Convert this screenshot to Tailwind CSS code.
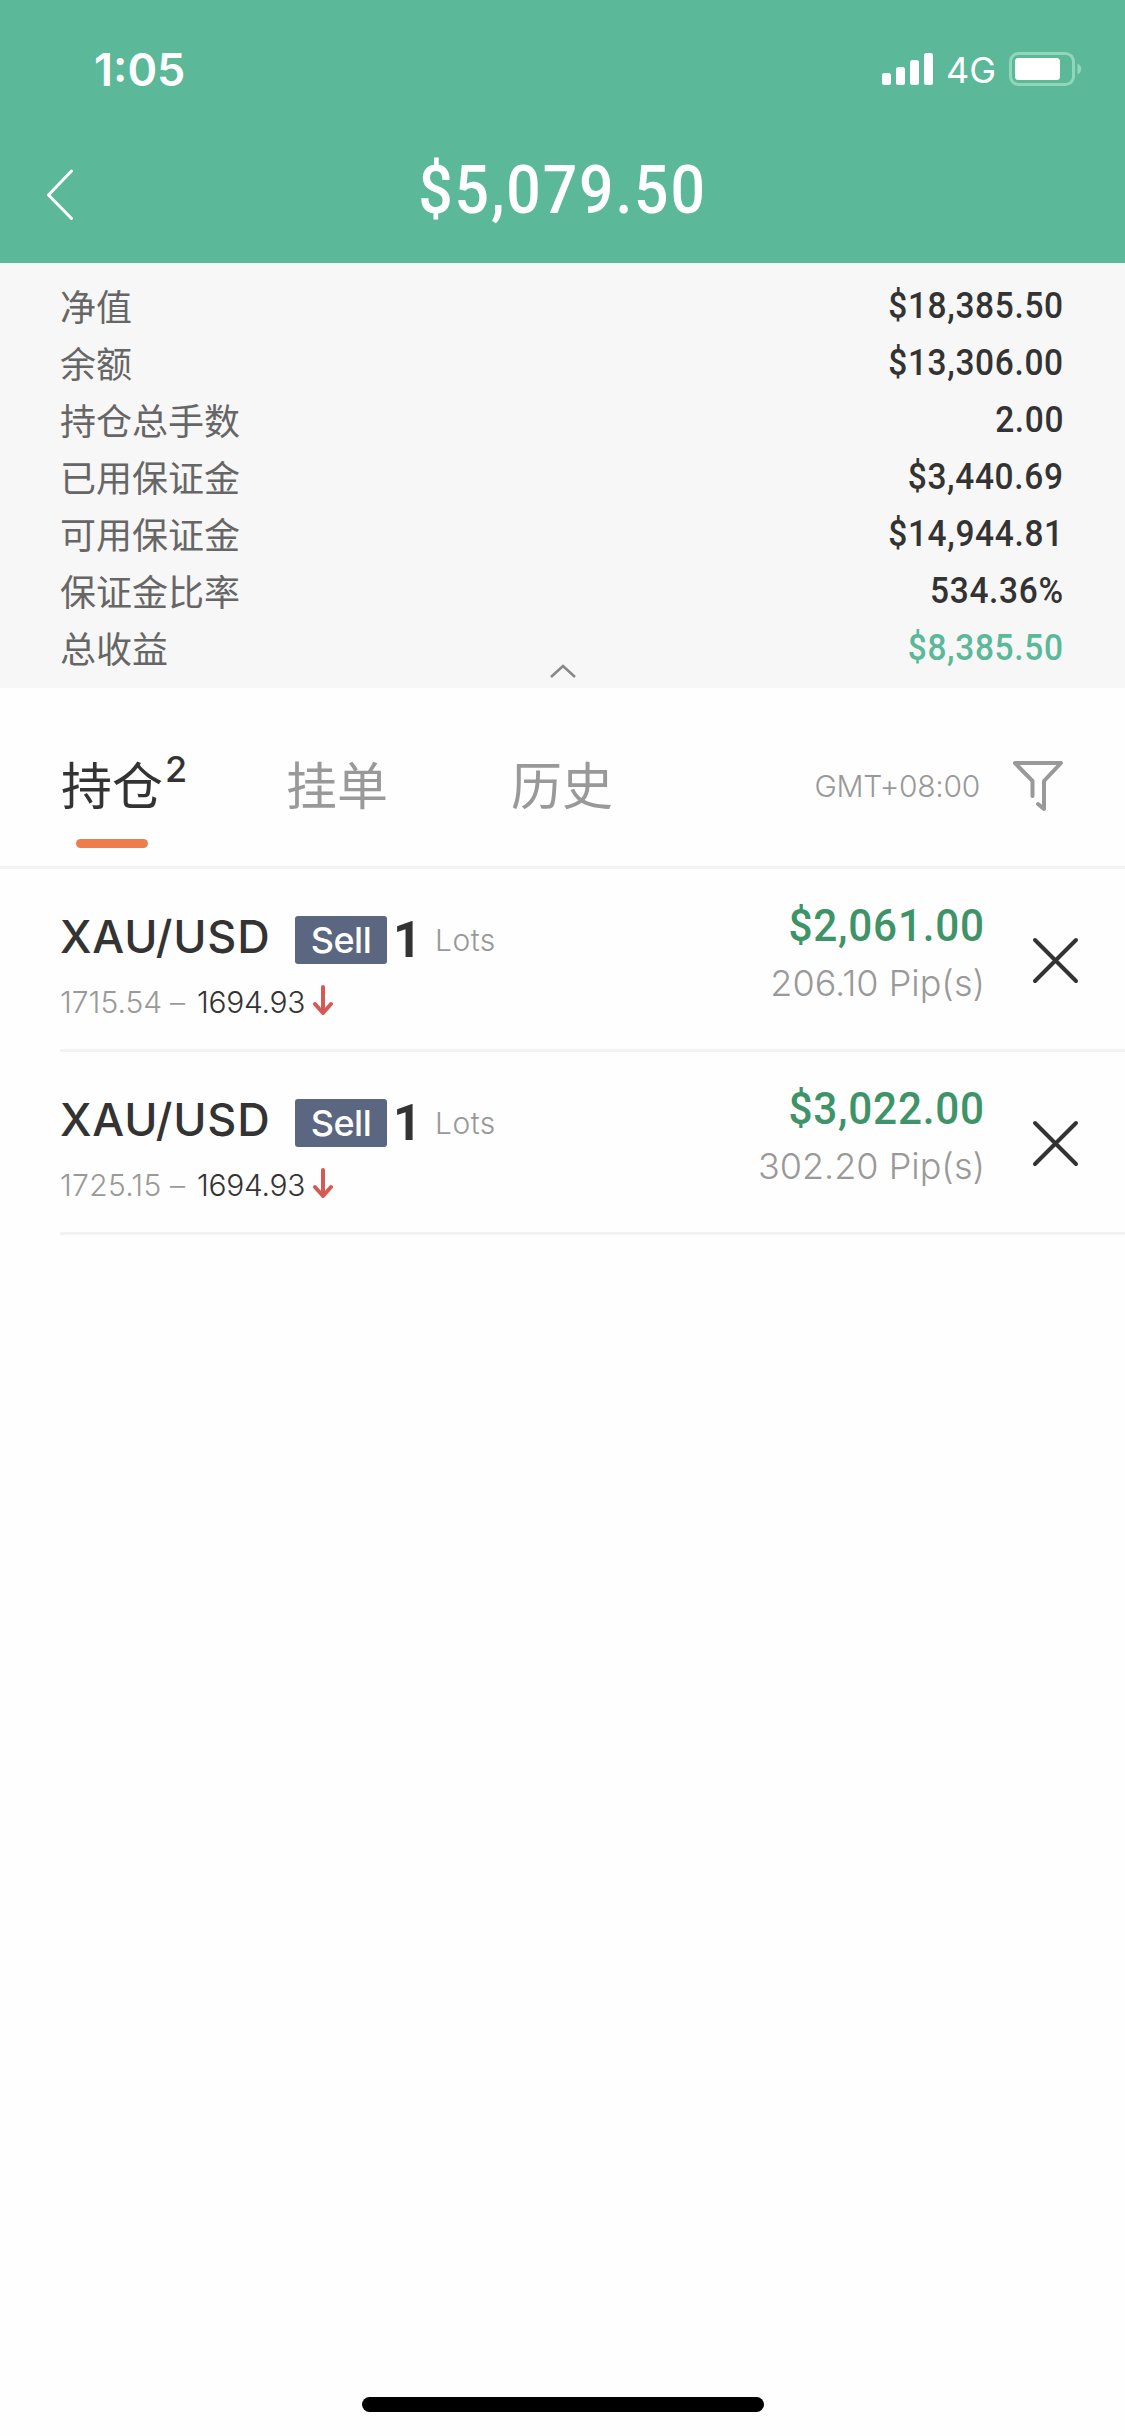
<!DOCTYPE html>
<html lang="zh-CN">
<head>
<meta charset="utf-8">
<title>持仓</title>
<script src="https://cdn.jsdelivr.net/npm/@tailwindcss/browser@4"></script>
</head>
<body class="w-[1125px] h-[2436px] bg-[#fefefe] font-['Inter','Noto_Sans_CJK_SC',sans-serif] flex flex-col overflow-hidden text-[#333]">
<header class="h-[263px] bg-[#5bb899] text-white flex flex-col shrink-0">
  <div class="h-[138px] pl-[94px] pr-[42px] flex items-center justify-between">
    <span class="text-[45px] leading-none font-semibold">1:05</span>
    <div class="flex items-center">
      <svg class="w-[52px] h-[34px]" viewBox="0 0 52 34" fill="currentColor"><rect x="0" y="21" width="9" height="12" rx="2.5"/><rect x="14" y="15" width="9" height="18" rx="2.5"/><rect x="28" y="8" width="9" height="25" rx="2.5"/><rect x="42" y="1" width="9" height="32" rx="2.5"/></svg>
      <span class="ml-[12px] w-[63px] text-[36px] leading-none mt-[2px]">4G</span>
      <svg class="w-[74px] h-[34px]" viewBox="0 0 74 34"><rect x="1.5" y="1.5" width="63" height="31" rx="8" fill="none" stroke="#8fd6ba" stroke-width="3"/><rect x="6" y="6" width="45" height="22" rx="3.5" fill="#fff"/><path d="M68.500 11.500c5 2 5 9 0 11z" fill="#8fd6ba"/></svg>
    </div>
  </div>
  <div class="h-[112px] grid grid-cols-[120px_1fr_120px] items-center">
    <svg class="ml-[44px] w-[32px] h-[54px]" viewBox="0 0 32 54" fill="none" stroke="currentColor" stroke-width="3" stroke-linecap="round" stroke-linejoin="round"><path d="M27.500 4L4.500 28 27.500 51.500"/></svg>
    <h1 class="text-center font-['Roboto',sans-serif] font-medium text-[66px] leading-none tracking-[2px] scale-x-[0.92] -mt-[7px]">$5,079.50</h1>
  </div>
</header>

<section class="relative h-[425px] shrink-0 bg-[#f7f7f7] pt-[15px] pl-[60px] pr-[61px] text-[36px] leading-[57px]">
  <dl class="text-[#666] [&_dt]:pt-[2px] [&_dt]:font-normal [&_dd]:font-['Roboto',sans-serif] [&_dd]:font-medium [&_dd]:text-[#333] [&_dd]:origin-right [&_dd]:scale-x-[0.93] [&_dd]:tracking-[0.700px]">
    <div class="flex justify-between h-[57px]"><dt>净值</dt><dd>$18,385.50</dd></div>
    <div class="flex justify-between h-[57px]"><dt>余额</dt><dd>$13,306.00</dd></div>
    <div class="flex justify-between h-[57px]"><dt>持仓总手数</dt><dd>2.00</dd></div>
    <div class="flex justify-between h-[57px]"><dt>已用保证金</dt><dd>$3,440.69</dd></div>
    <div class="flex justify-between h-[57px]"><dt>可用保证金</dt><dd>$14,944.81</dd></div>
    <div class="flex justify-between h-[57px]"><dt>保证金比率</dt><dd>534.36%</dd></div>
    <div class="flex justify-between h-[57px]"><dt>总收益</dt><dd class="text-[#5bb899]!">$8,385.50</dd></div>
  </dl>
  <svg class="absolute left-[549px] top-[400px] w-[28px] h-[16px]" viewBox="0 0 28 16" fill="none" stroke="#888" stroke-width="2.500"><path d="M2 14L14 3l12 11"/></svg>
</section>

<nav class="h-[181px] shrink-0 border-b-[3px] border-[#f2f2f2] pl-[61px] pr-[60px] flex text-[51px] leading-none text-[#999]">
  <div class="w-[225px] flex flex-col text-[#333]">
    <div class="h-[151px] pt-[73px] flex"><span>持仓</span><span class="text-[36px] font-medium -mt-[10px] ml-[2px]">2</span></div>
    <div class="ml-[15px] w-[72px] h-[9px] rounded-full bg-[#ee7d4d]"></div>
  </div>
  <span class="w-[225px] pt-[73px]">挂单</span>
  <span class="pt-[73px]">历史</span>
  <span class="ml-auto pt-[83px] text-[30px] font-light tracking-[-0.300px]">GMT+08:00</span>
  <svg class="ml-[31px] mt-[71px] w-[54px] h-[54px]" viewBox="0 0 54 54" fill="none" stroke="#999" stroke-width="4" stroke-linecap="round" stroke-linejoin="round"><path d="M21.500 37V22L4 4h46L33 22v28l-6-5"/></svg>
</nav>

<main class="flex-1">
  <article class="ml-[60px] h-[183px] border-b-[3px] border-[#f2f2f2] flex">
    <div class="pt-[47px]">
      <div class="flex items-start h-[48px]">
        <span class="w-[235px] text-[45px] leading-[41px] font-medium tracking-[0.800px]">XAU/USD</span>
        <span class="w-[92px] h-[48px] rounded-[3px] bg-[#5b6680] text-white text-[36px] leading-[48px] font-medium text-center tracking-[-0.500px]">Sell</span>
        <span class="w-[48px] pl-[6px] text-[50px] leading-[49px] font-['Roboto',sans-serif] font-bold">1</span>
        <span class="text-[30px] leading-[48px] font-light text-[#999] tracking-[0.500px]">Lots</span>
      </div>
      <div class="mt-[16px] flex items-center text-[30px] leading-[44px] font-light text-[#999]">
        <span class="w-[110px]">1715.54</span><span class="w-[27px]">–</span><span class="w-[116px] font-[350] tracking-[-0.300px] text-[#333]">1694.93</span>
        <svg class="-mt-[4px] w-[20px] h-[30px]" viewBox="0 0 20 30" fill="none" stroke="#d45b55" stroke-width="4" stroke-linecap="round" stroke-linejoin="round"><path d="M10 2v26M2 19l8 9 8-9"/></svg>
      </div>
    </div>
    <div class="ml-auto pt-[30px] flex flex-col items-end">
      <span class="h-[53px] text-[45px] leading-[53px] font-['Roboto',sans-serif] font-medium text-[#3f9368] origin-right scale-x-[0.94] tracking-[0.800px]">$2,061.00</span>
      <span class="mt-[3px] text-[36px] leading-[56px] font-light text-[#999]">206.10 Pip(s)</span>
    </div>
    <svg class="ml-[46px] mr-[46px] mt-[67px] w-[48px] h-[48px]" viewBox="0 0 48 48" fill="none" stroke="#333" stroke-width="4" stroke-linecap="round"><path d="M4 4l41 41M45 4L4 45"/></svg>
  </article>
  <article class="ml-[60px] h-[183px] border-b-[3px] border-[#f2f2f2] flex">
    <div class="pt-[47px]">
      <div class="flex items-start h-[48px]">
        <span class="w-[235px] text-[45px] leading-[41px] font-medium tracking-[0.800px]">XAU/USD</span>
        <span class="w-[92px] h-[48px] rounded-[3px] bg-[#5b6680] text-white text-[36px] leading-[48px] font-medium text-center tracking-[-0.500px]">Sell</span>
        <span class="w-[48px] pl-[6px] text-[50px] leading-[49px] font-['Roboto',sans-serif] font-bold">1</span>
        <span class="text-[30px] leading-[48px] font-light text-[#999] tracking-[0.500px]">Lots</span>
      </div>
      <div class="mt-[16px] flex items-center text-[30px] leading-[44px] font-light text-[#999]">
        <span class="w-[110px] tracking-[0.300px]">1725.15</span><span class="w-[27px]">–</span><span class="w-[116px] font-[350] tracking-[-0.300px] text-[#333]">1694.93</span>
        <svg class="-mt-[4px] w-[20px] h-[30px]" viewBox="0 0 20 30" fill="none" stroke="#d45b55" stroke-width="4" stroke-linecap="round" stroke-linejoin="round"><path d="M10 2v26M2 19l8 9 8-9"/></svg>
      </div>
    </div>
    <div class="ml-auto pt-[30px] flex flex-col items-end">
      <span class="h-[53px] text-[45px] leading-[53px] font-['Roboto',sans-serif] font-medium text-[#3f9368] origin-right scale-x-[0.94] tracking-[0.800px]">$3,022.00</span>
      <span class="mt-[3px] text-[36px] leading-[56px] font-light text-[#999]">302.20 Pip(s)</span>
    </div>
    <svg class="ml-[46px] mr-[46px] mt-[67px] w-[48px] h-[48px]" viewBox="0 0 48 48" fill="none" stroke="#333" stroke-width="4" stroke-linecap="round"><path d="M4 4l41 41M45 4L4 45"/></svg>
  </article>
</main>

<footer class="h-[39px] shrink-0 flex justify-center items-start"><div class="w-[402px] h-[15px] rounded-full bg-black"></div></footer>
</body>
</html>
